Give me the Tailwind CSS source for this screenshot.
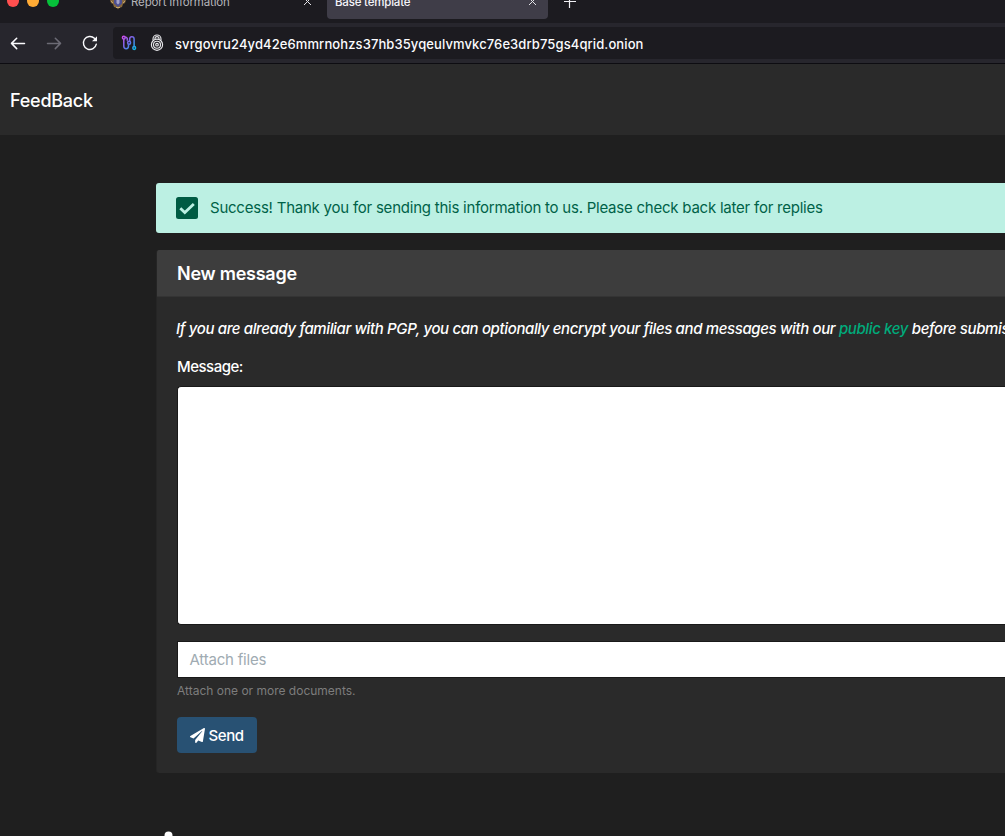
<!DOCTYPE html>
<html lang="en">
<head>
<meta charset="utf-8">
<title>Base template</title>
<script src="https://cdn.jsdelivr.net/npm/@tailwindcss/browser@4"></script>
</head>
<body class="flex h-[836px] w-[1005px] flex-col overflow-hidden bg-[#1f1f1f] font-['Inter','Liberation_Sans',sans-serif] text-white">
  <!-- tab strip -->
  <div class="flex h-[23px] shrink-0 items-start overflow-hidden bg-[#1c1b20]">
    <svg class="h-[19px] w-[70px] shrink-0" viewBox="0 0 70 19"><circle cx="13" cy="1" r="6" fill="#ff4f4f"/><circle cx="33" cy="1" r="6" fill="#ffab35"/><circle cx="53" cy="1" r="6" fill="#06c13a"/></svg>
    <div class="flex w-[257px] shrink-0 items-start pl-[40px]">
      <svg class="h-[10px] w-[16px] shrink-0" viewBox="0 0 16 10"><path d="M0 0h16l-1 3-2 1-1 3-3 1-1 1.500-1-1.500-3-1-1-3-2-1z" fill="#85683f"/><path d="M4 0h8v3.500L8 7 4 3.500z" fill="#4c4f91"/><path d="M6.500 0h3v3L8 4.500 6.500 3z" fill="#a5a4cb"/><path d="M1 1l2 2M15 1l-2 2M6 7.500h4" stroke="#c4a568" fill="none"/></svg>
      <span class="-mt-[6px] ml-[5px] w-[172px] whitespace-nowrap text-[11.5px] leading-[16px] tracking-[-0.15px] text-[#b5b5ba]">Report Information</span>
      <svg class="h-[10px] w-[10px]" viewBox="0 0 10 10" fill="none" stroke="#e2e2e6" stroke-width="1"><path d="M1-2 8 5M8-2 1 5"/></svg>
    </div>
    <div class="flex h-[19px] w-[221px] shrink-0 items-start rounded-b-[4px] bg-[#3f3d48] pl-2">
      <span class="-mt-[6px] w-[193px] whitespace-nowrap text-[11.5px] font-medium leading-[16px] tracking-[-0.2px] text-[#f5f5fa]">Base template</span>
      <svg class="h-[10px] w-[10px]" viewBox="0 0 10 10" fill="none" stroke="#e2e2e6" stroke-width="1"><path d="M1-2 8 5M8-2 1 5"/></svg>
    </div>
    <svg class="ml-[15px] h-[10px] w-[14px]" viewBox="0 0 14 10" fill="none" stroke="#f1f1f5" stroke-width="1.200"><path d="M1 1.500h12M6.500-4v12"/></svg>
  </div>
  <!-- navigation toolbar -->
  <div class="flex h-[41px] shrink-0 items-start border-b border-[#0d0c11] bg-[#27262d] pt-1">
    <div class="flex h-8 w-[113px] items-center pl-[10px]">
      <svg class="h-4 w-4" viewBox="0 0 16 16" fill="none" stroke="#fbfbfe" stroke-width="1.500" stroke-linecap="round" stroke-linejoin="round"><path d="M14.500 8.400H1.500M6.700 3.200 1.500 8.400 6.700 13.600"/></svg>
      <svg class="ml-[20px] h-4 w-4" viewBox="0 0 16 16" fill="none" stroke="#6c6b75" stroke-width="1.500" stroke-linecap="round" stroke-linejoin="round"><path d="M1.500 8.400h13M9.300 3.200 14.500 8.400 9.300 13.600"/></svg>
      <svg class="ml-[20px] h-4 w-4" viewBox="0 0 16 16" fill="none" stroke="#fbfbfe" stroke-width="1.400" stroke-linecap="round"><path d="M14.300 9.200A6.500 6.500 0 1 1 12.400 3.300"/><path d="M15 1.300v5h-5z" fill="#fbfbfe" stroke="none"/></svg>
    </div>
    <div class="flex h-8 w-[892px] items-center rounded-l-[4px] bg-[#1c1b20] pl-2">
      <svg class="h-4 w-4" viewBox="0 0 16 16" fill="none" stroke-width="1.500"><defs><linearGradient id="circuit" gradientUnits="userSpaceOnUse" x1="1" y1="1" x2="15" y2="15"><stop stop-color="#d74bed"/><stop offset=".5" stop-color="#696ee9"/><stop offset="1" stop-color="#00c8e7"/></linearGradient></defs><g stroke="url(#circuit)"><circle cx="2.800" cy="2.700" r="1.400"/><circle cx="13.200" cy="13" r="1.400"/><circle cx="8.100" cy="7.700" r="1.500"/><path d="M2.800 4v7.300a2.300 2.300 0 0 0 4.700 0V9.200M8.700 6.200V3.900a2.200 2.200 0 0 1 4.400 0v7.700M4.300 2.300h.6a2 2 0 0 1 1.400 1.400v2"/></g></svg>
      <svg class="ml-[12px] h-[18px] w-4" viewBox="0 0 16 18" fill="none" stroke="#e7e7ea" stroke-width="1.150"><path d="M4 6.300V5a4 4 0 0 1 8 0v1.300M6 5V4.600a2 2 0 0 1 4 0V5"/><circle cx="8" cy="10.700" r="5.600"/><circle cx="8" cy="10.700" r="3.500"/><circle cx="8" cy="10.700" r="1.300"/></svg>
      <span class="ml-[10px] whitespace-nowrap pt-[3px] text-[13px] font-medium tracking-[0.1px] text-[#fbfbfe]">svrgovru24yd42e6mmrnohzs37hb35yqeulvmvkc76e3drb75gs4qrid.onion</span>
    </div>
  </div>
  <header class="flex h-[71px] shrink-0 items-center bg-[#2a2a2a] pl-[10px]">
    <span class="pt-[2px] text-[18px] font-medium leading-7 tracking-[-0.24px]">FeedBack</span>
  </header>
  <main class="ml-[156px] mt-[48px] w-[849px] shrink-0">
    <div class="flex h-[50px] items-center rounded-l-[3px] bg-[#bcf0e3] pl-[20px] text-[#006248]">
      <svg class="h-[22px] w-[22px]" viewBox="0 0 22 22"><rect width="22" height="22" rx="2.500" fill="#005b43"/><path d="M4.300 11.200l4.500 4.300 9-8.500" fill="none" stroke="#bcf0e3" stroke-width="2.800"/></svg>
      <span class="ml-3 whitespace-nowrap text-[15px] tracking-[-0.23px]">Success! Thank you for sending this information to us. Please check back later for replies</span>
    </div>
    <section class="mt-[17px] h-[523px] overflow-hidden rounded-l-[3px] border-l border-[#252525] bg-[#2a2a2a]">
      <div class="flex h-[47px] items-center border-b border-[#343434] bg-[#3d3d3d] pl-[20px]">
        <h2 class="pt-[2px] text-[18px] font-semibold leading-6 tracking-[-0.25px]">New message</h2>
      </div>
      <div class="pl-[20px] pt-[20px]">
        <p class="-ml-px whitespace-nowrap text-[15px] font-medium italic leading-6 tracking-[-0.37px]">If you are already familiar with PGP, you can optionally encrypt your files and messages with our <a class="text-[#00ab7b]">public key</a> before submission.</p>
        <label class="mt-[14px] block text-[15px] font-medium leading-6 tracking-[-0.5px]">Message:</label>
        <div class="mt-[7px] h-[239px] rounded-l-[4px] border border-r-0 border-[#191919] bg-white"></div>
        <div class="mt-4 flex h-[37px] items-center border border-r-0 border-[#191919] bg-white pl-[11.5px] pt-[2px] text-[15px] tracking-[-0.2px] text-[#a0abb2]">Attach files</div>
        <small class="mt-[4px] block text-[12px] leading-[18px] text-[#7d7d7d]">Attach one or more documents.</small>
        <button class="mt-[17px] flex h-9 w-20 items-center rounded-[4px] bg-[#285173] pl-[12.500px] text-[15px] font-medium">
          <svg class="mt-px h-[15px] w-[15px]" viewBox="0 0 512 512" fill="white"><path d="M476 3.200L12.500 270.600c-18.100 10.400-15.800 35.600 2.200 43.200L121 358.400l287.300-253.200c5.500-4.900 13.300 2.600 8.600 8.300L176 407v80.500c0 23.600 28.500 32.900 42.500 15.800L282 426l124.600 52.200c14.200 6 30.400-2.900 33-18.200l72-432C515 7.800 493.300-6.800 476 3.200z"/></svg>
          <span class="ml-[4px] pt-[2px] tracking-[-0.4px]">Send</span>
        </button>
      </div>
    </section>
  </main>
  <!-- top of the footer logo, cut by the viewport edge -->
  <footer class="mt-[58px] h-[5px] shrink-0 overflow-hidden pl-[164px]"><svg class="h-[10px] w-[9px]" viewBox="0 0 9 10"><circle cx="4.500" cy="4.500" r="4" fill="#fff"/></svg></footer>
</body>
</html>
